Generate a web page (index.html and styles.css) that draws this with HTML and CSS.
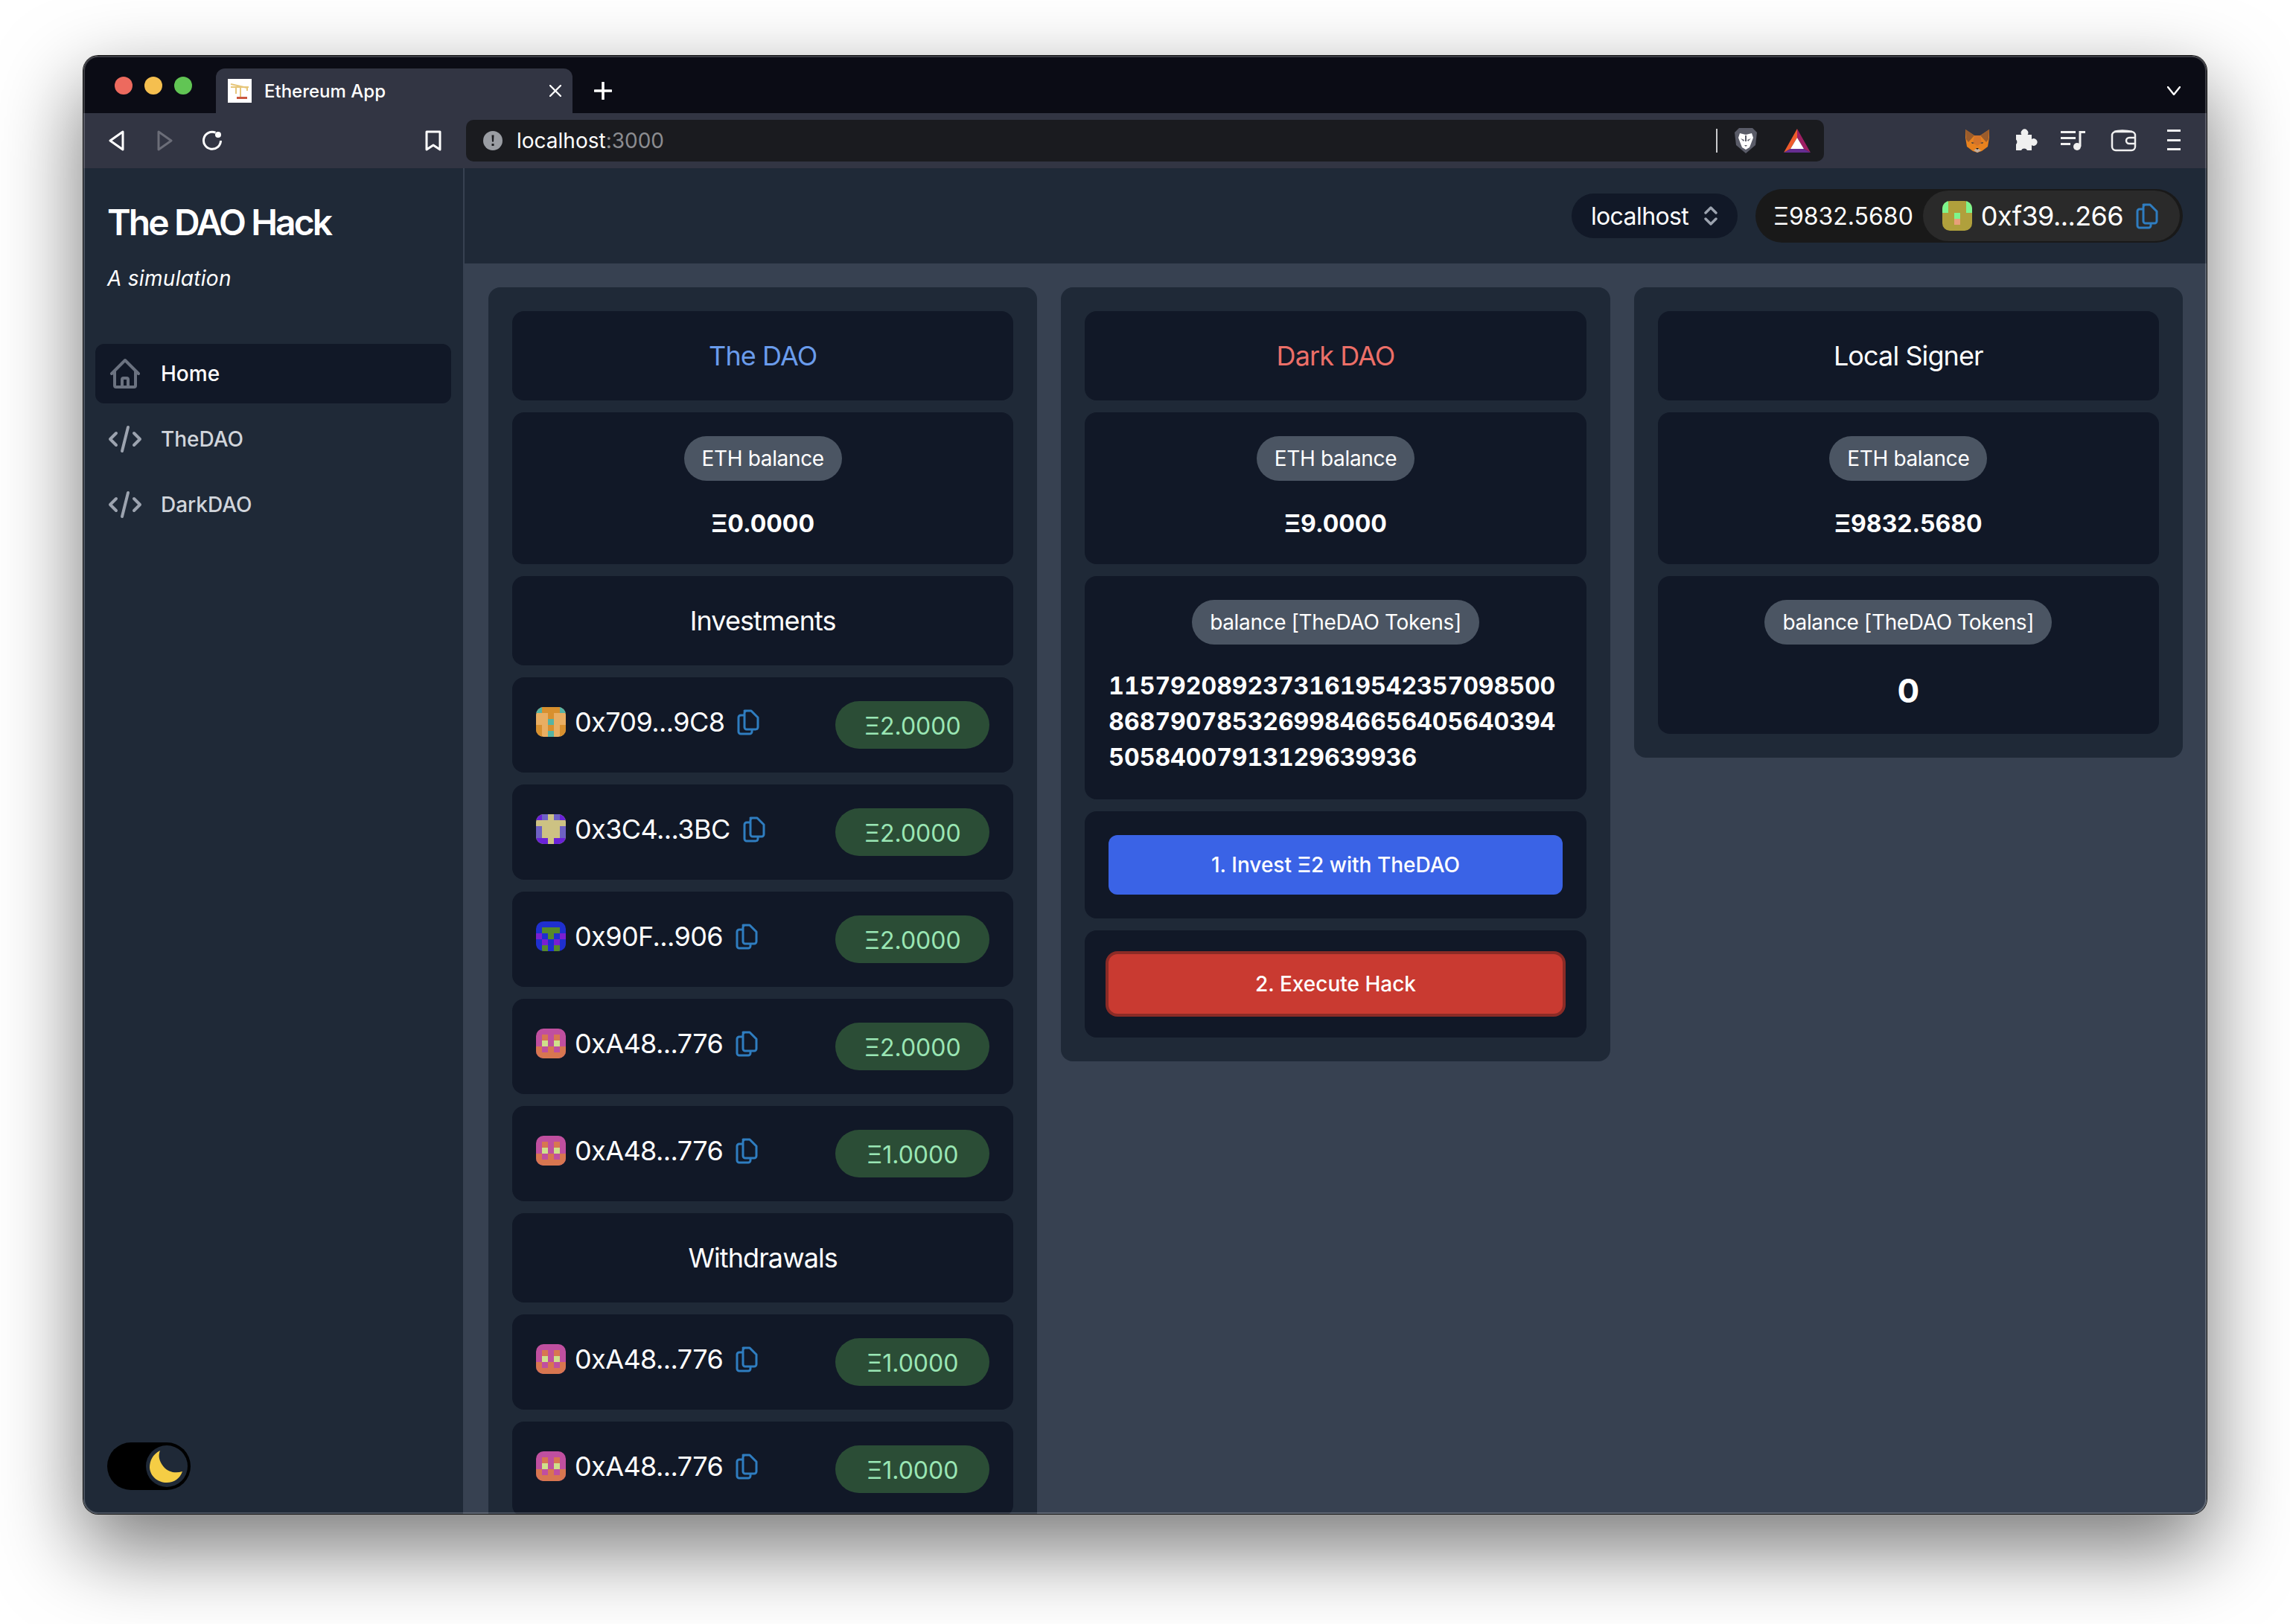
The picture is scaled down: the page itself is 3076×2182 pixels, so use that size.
FILE: index.html
```html
<!DOCTYPE html>
<html lang="en">
<head>
    <meta charset="UTF-8">
    <title>Ethereum App</title>
    <link rel="stylesheet" href="styles.css">
</head>
<body>
    <svg class="sprite">
        <symbol id="copy" viewBox="0 0 32 36">
            <path d="M11 3h9l9 9v13a3 3 0 0 1-3 3H14a3 3 0 0 1-3-3V6a3 3 0 0 1 3-3z" fill="none" stroke="currentColor" stroke-width="3" stroke-linejoin="round"/>
            <path d="M11 9H6a3 3 0 0 0-3 3v19a3 3 0 0 0 3 3h12a3 3 0 0 0 3-3v-3" fill="none" stroke="currentColor" stroke-width="3" stroke-linejoin="round"/>
        </symbol>
        <symbol id="code" viewBox="0 0 24 24">
            <path d="M10 20l4-16m4 4l4 4-4 4M6 16l-4-4 4-4" fill="none" stroke="currentColor" stroke-width="2" stroke-linecap="round" stroke-linejoin="round"/>
        </symbol>
        <symbol id="blockie-a48" viewBox="0 0 5 5">
            <path fill="#c04f9f" d="M0 0h5v5H0z"/>
            <path fill="#d87650" d="M1 1h1v1H1zM3 1h1v1H3zM0 3h1v1H0zM2 3h1v1H2zM4 3h1v1H4zM0 4h5v1H0z"/>
            <path fill="#cfe08a" d="M1 2h1v1H1zM3 2h1v1H3z"/>
        </symbol>
        <symbol id="blockie-709" viewBox="0 0 5 5">
            <path fill="#e9ae62" d="M0 0h5v5H0z"/>
            <path fill="#d8902e" d="M1 0h3v1H1zM2 1h1v1H2zM2 3h1v1H2zM0 3h1v2H0zM4 3h1v2H4z"/>
            <path fill="#56b3a3" d="M0 0h1v1H0zM4 0h1v1H4zM2 2h1v1H2zM2 4h1v1H2z"/>
        </symbol>
        <symbol id="blockie-3c4" viewBox="0 0 5 5">
            <path fill="#cdc283" d="M0 0h5v5H0z"/>
            <path fill="#6a22d8" d="M0 0h1v1H0zM4 0h1v1H4zM0 4h2v1H0zM3 4h2v1H3z"/>
            <path fill="#6e61c4" d="M1 0h1v1H1zM3 0h1v1H3zM0 2h1v2H0zM4 2h1v2H4z"/>
        </symbol>
        <symbol id="blockie-90f" viewBox="0 0 5 5">
            <path fill="#1f2fcf" d="M0 0h5v5H0z"/>
            <path fill="#568a2a" d="M1 1h3v1H1zM2 2h1v1H2zM1 4h1v1H1zM3 4h1v1H3z"/>
            <path fill="#7a1fd0" d="M0 2h1v1H0zM4 2h1v1H4zM1 3h1v1H1zM3 3h1v1H3z"/>
        </symbol>
        <symbol id="blockie-f39" viewBox="0 0 5 5">
            <path fill="#b0a03c" d="M0 0h5v5H0z"/>
            <path fill="#7ef58c" d="M0 0h1v2H0zM4 0h1v2H4zM2 2h1v1H2z"/>
            <path fill="#e8a07a" d="M2 3h1v1H2z"/>
        </symbol>
    </svg>

    <div class="window">
        <div class="tabstrip">
            <div class="dots">
                <span class="dot dot-red"></span>
                <span class="dot dot-yellow"></span>
                <span class="dot dot-green"></span>
            </div>
            <div class="tab">
                <svg class="favicon" viewBox="0 0 32 32">
                    <path fill="#fff" d="M0 0h32v32H0z"/>
                    <path d="M4 7l22 5M4 11h24M17 11v14M11 11v9M26 11v5" fill="none" stroke="#e6c67a" stroke-width="2"/>
                    <path fill="#c9573f" d="M12 24h14v3H12z"/>
                </svg>
                <span class="tab-title">Ethereum App</span>
                <svg class="tab-close" viewBox="0 0 16 16"><path d="M1 1l14 14M15 1L1 15" stroke="#fff" stroke-width="2.4" stroke-linecap="round"/></svg>
            </div>
            <svg class="tab-new" viewBox="0 0 24 24"><path d="M12 1v22M1 12h22" stroke="#fff" stroke-width="3.6" stroke-linecap="round"/></svg>
            <svg class="tab-list" viewBox="0 0 18 12"><path d="M1 1l8 10 8-10" fill="none" stroke="#fff" stroke-width="2.4" stroke-linecap="round" stroke-linejoin="round"/></svg>
        </div>

        <div class="toolbar">
            <div class="nav-btns">
                <svg class="tool" viewBox="0 0 28 28"><path d="M22 2L5 14l17 12z" fill="none" stroke="#fff" stroke-width="3" stroke-linejoin="round"/></svg>
                <svg class="tool" viewBox="0 0 28 28"><path d="M6 2l17 12L6 26z" fill="none" stroke="#6b6d78" stroke-width="3" stroke-linejoin="round"/></svg>
                <svg class="tool" viewBox="0 0 28 28"><path d="M18.500 3.200A11.500 11.500 0 1 0 25.500 14" fill="none" stroke="#fff" stroke-width="3"/><circle cx="22" cy="6" r="4" fill="#fff"/></svg>
            </div>
            <svg class="tool bookmark" viewBox="0 0 28 28"><path d="M5 2h18v24l-9-6-9 6z" fill="none" stroke="#fff" stroke-width="3" stroke-linejoin="round"/></svg>
            <div class="urlbar">
                <svg class="url-info" viewBox="0 0 26 26"><circle cx="13" cy="13" r="13" fill="#9a9da3"/><path fill="#1a1b1f" d="M11.500 5.500h3l-.5 9h-2zM11.500 17h3v3h-3z"/></svg>
                <span class="url-host">localhost<span class="url-port">:3000</span></span>
                <span class="url-sep"></span>
                <svg class="brave" viewBox="0 0 32 36">
                    <path fill="#5a5c68" d="M7 1h18l6 6-2 17-13 11-13-11L1 7z"/>
                    <path fill="#fff" d="M8 8l8 2 8-2 2 6-3 8-2 5-5 3-5-3-2-5-3-8z"/>
                    <path fill="#5a5c68" d="M9 15l5 2-1 2zM23 15l-5 2 1 2zM14 24h4l-2 2zM15 11h2v8h-2z"/>
                </svg>
                <svg class="bat" viewBox="0 0 36 32">
                    <path fill="#ee5b2c" d="M18 0v12L9 27l-9 5z"/>
                    <path fill="#9e1f63" d="M18 0v12l9 15 9 5z"/>
                    <path fill="#662d91" d="M0 32l9-5h18l9 5z"/>
                    <path fill="#fff" d="M18 12l9 15H9z"/>
                </svg>
            </div>
            <div class="extensions">
                <svg class="ext" viewBox="0 0 36 36">
                    <path fill="#e8821e" d="M2 14l2 12 8 6 6 2 6-2 8-6 2-12V3L22 11h-8L2 3z"/>
                    <path fill="#9a5c2c" d="M2 3l12 8-8 9-3-4zM34 3L22 11l8 9 3-4z"/>
                    <path fill="#d4742a" d="M14 11h8l2 10-6 4-6-4z"/>
                    <path fill="#233447" d="M10 20l4 1-3 1zM26 20l-4 1 3 1z"/>
                    <path fill="#c0ad9e" d="M13 31l5 3 5-3-5-3z"/>
                    <path fill="#161616" d="M16 28h4l-2 2z"/>
                </svg>
                <svg class="ext" viewBox="0 0 36 36"><path fill="#f0f0f0" d="M6 10h7.500a4.800 4.800 0 1 1 8 0H27v6a4.800 4.800 0 1 1 0 8v7h-6a4.500 4.500 0 0 0-8 0H6v-8a4.500 4.500 0 0 0 0-6.500z"/></svg>
                <svg class="ext" viewBox="0 0 36 36">
                    <path d="M2 6.500h20M2 14.500h20M2 22.500h13M28 26V6.500h7" fill="none" stroke="#f0f0f0" stroke-width="3"/>
                    <circle cx="24" cy="26" r="5" fill="#f0f0f0"/>
                </svg>
                <svg class="ext ext-wide" viewBox="0 0 36 36">
                    <rect x="3" y="6" width="31" height="25" rx="5" fill="none" stroke="#f0f0f0" stroke-width="2.500"/>
                    <path d="M34 14h-8a4 4 0 0 0 0 8h8M6 6c5-2 16-2 24 0" fill="none" stroke="#f0f0f0" stroke-width="2.500"/>
                </svg>
                <svg class="ext ext-wide" viewBox="0 0 36 36"><path d="M9 4.500h18M9 17.500h18M9 29.500h18" stroke="#f0f0f0" stroke-width="3"/></svg>
            </div>
        </div>

        <div class="app">
            <aside class="sidebar">
                <h1 class="brand">The DAO Hack</h1>
                <p class="tagline">A simulation</p>
                <nav class="nav">
                    <a class="nav-item active">
                        <svg class="nav-icon home-icon" viewBox="0 0 24 24"><path d="M3 12l2-2m0 0l7-7 7 7M5 10v10a1 1 0 001 1h3m10-11l2 2m-2-2v10a1 1 0 01-1 1h-3m-6 0a1 1 0 001-1v-4a1 1 0 011-1h2a1 1 0 011 1v4a1 1 0 001 1m-6 0h6" fill="none" stroke="currentColor" stroke-width="2" stroke-linecap="round" stroke-linejoin="round"/></svg>
                        Home
                    </a>
                    <a class="nav-item">
                        <svg class="nav-icon"><use href="#code"/></svg>
                        TheDAO
                    </a>
                    <a class="nav-item">
                        <svg class="nav-icon"><use href="#code"/></svg>
                        DarkDAO
                    </a>
                </nav>
                <div class="theme-toggle">
                    <span class="toggle-knob">
                        <svg viewBox="0 0 56 56"><path fill="#f5cd45" d="M19 7C9 12 5 21 5 30c1 12 11 20 23 20 10 0 18-6 21-15-9 3-19 1-25-6C18 22 16 14 19 7z"/></svg>
                    </span>
                </div>
            </aside>

            <main class="main">
                <header class="topbar">
                    <div class="network">
                        localhost
                        <svg class="network-arrows" viewBox="0 0 18 26"><path d="M2 9l7-7 7 7M2 17l7 7 7-7" fill="none" stroke="#9ca3af" stroke-width="3.4" stroke-linecap="round" stroke-linejoin="round"/></svg>
                    </div>
                    <div class="wallet">
                        <span class="wallet-balance">Ξ9832.5680</span>
                        <div class="wallet-account">
                            <svg class="blockie"><use href="#blockie-f39"/></svg>
                            <span>0xf39...266</span>
                            <svg class="copy"><use href="#copy"/></svg>
                        </div>
                    </div>
                </header>

                <div class="columns">
                    <section class="column">
                        <div class="card card-title title-blue">The DAO</div>
                        <div class="card stat">
                            <span class="badge">ETH balance</span>
                            <div class="stat-value">Ξ0.0000</div>
                        </div>
                        <div class="card card-title">Investments</div>
                        <div class="card row">
                            <div class="address"><svg class="blockie"><use href="#blockie-709"/></svg><span>0x709...9C8</span><svg class="copy"><use href="#copy"/></svg></div>
                            <span class="amount">Ξ2.0000</span>
                        </div>
                        <div class="card row">
                            <div class="address"><svg class="blockie"><use href="#blockie-3c4"/></svg><span>0x3C4...3BC</span><svg class="copy"><use href="#copy"/></svg></div>
                            <span class="amount">Ξ2.0000</span>
                        </div>
                        <div class="card row">
                            <div class="address"><svg class="blockie"><use href="#blockie-90f"/></svg><span>0x90F...906</span><svg class="copy"><use href="#copy"/></svg></div>
                            <span class="amount">Ξ2.0000</span>
                        </div>
                        <div class="card row">
                            <div class="address"><svg class="blockie"><use href="#blockie-a48"/></svg><span>0xA48...776</span><svg class="copy"><use href="#copy"/></svg></div>
                            <span class="amount">Ξ2.0000</span>
                        </div>
                        <div class="card row">
                            <div class="address"><svg class="blockie"><use href="#blockie-a48"/></svg><span>0xA48...776</span><svg class="copy"><use href="#copy"/></svg></div>
                            <span class="amount">Ξ1.0000</span>
                        </div>
                        <div class="card card-title">Withdrawals</div>
                        <div class="card row">
                            <div class="address"><svg class="blockie"><use href="#blockie-a48"/></svg><span>0xA48...776</span><svg class="copy"><use href="#copy"/></svg></div>
                            <span class="amount">Ξ1.0000</span>
                        </div>
                        <div class="card row">
                            <div class="address"><svg class="blockie"><use href="#blockie-a48"/></svg><span>0xA48...776</span><svg class="copy"><use href="#copy"/></svg></div>
                            <span class="amount">Ξ1.0000</span>
                        </div>
                    </section>

                    <section class="column">
                        <div class="card card-title title-red">Dark DAO</div>
                        <div class="card stat">
                            <span class="badge">ETH balance</span>
                            <div class="stat-value">Ξ9.0000</div>
                        </div>
                        <div class="card stat">
                            <span class="badge">balance [TheDAO Tokens]</span>
                            <div class="stat-value stat-long">115792089237316195423570985008687907853269984665640564039450584007913129639936</div>
                        </div>
                        <div class="card">
                            <button class="btn btn-blue">1. Invest Ξ2 with TheDAO</button>
                        </div>
                        <div class="card">
                            <button class="btn btn-red">2. Execute Hack</button>
                        </div>
                    </section>

                    <section class="column">
                        <div class="card card-title">Local Signer</div>
                        <div class="card stat">
                            <span class="badge">ETH balance</span>
                            <div class="stat-value">Ξ9832.5680</div>
                        </div>
                        <div class="card stat">
                            <span class="badge">balance [TheDAO Tokens]</span>
                            <div class="stat-value stat-big">0</div>
                        </div>
                    </section>
                </div>
            </main>
        </div>
    </div>
</body>
</html>
```

FILE: styles.css
```css
* {
    box-sizing: border-box;
}
html, body {
    margin: 0;
    height: 2182px;
    overflow: hidden;
}
body {
    background: #fff;
    padding: 75px 112px 0 112px;
    font-family: Inter, "Noto Sans", sans-serif;
    color: #fff;
}
.sprite {
    display: none;
}

/* browser window */
.window {
    position: relative;
    height: 1959px;
    display: flex;
    flex-direction: column;
    border-radius: 20px;
    overflow: hidden;
    box-shadow: 0 0 0 1px #111, 0 44px 110px 4px rgba(0, 0, 0, .52);
}
.window::after {
    content: "";
    position: absolute;
    inset: 0;
    border: 2px solid rgba(255, 255, 255, .2);
    border-radius: 20px;
    pointer-events: none;
}
.tabstrip {
    height: 77px;
    flex: none;
    display: flex;
    align-items: flex-end;
    background: #0b0c15;
    padding: 0 35px 0 42px;
}
.dots {
    align-self: flex-start;
    display: flex;
    gap: 16px;
    margin-top: 28px;
}
.dot {
    width: 24px;
    height: 24px;
    border-radius: 50%;
}
.dot-red { background: #ed6a5e; }
.dot-yellow { background: #f5bf4f; }
.dot-green { background: #61c554; }
.tab {
    width: 479px;
    height: 60px;
    margin-left: 32px;
    padding: 0 15px 0 16px;
    display: flex;
    align-items: center;
    background: #323543;
    border-radius: 12px 12px 0 0;
}
.favicon {
    width: 32px;
    height: 32px;
    margin-right: 17px;
}
.tab-title {
    font-size: 24px;
    font-weight: 500;
}
.tab-close {
    width: 16px;
    height: 16px;
    margin-left: auto;
}
.tab-new {
    width: 24px;
    height: 24px;
    margin: 0 0 18px 29px;
}
.tab-list {
    width: 18px;
    height: 12px;
    margin: 0 0 24px auto;
}

.toolbar {
    height: 74px;
    flex: none;
    display: flex;
    align-items: center;
    background: #323543;
    padding: 0 26px 0 31px;
}
.nav-btns {
    display: flex;
    gap: 36px;
}
.tool {
    width: 28px;
    height: 28px;
    display: block;
}
.bookmark {
    margin-left: 269px;
}
.urlbar {
    width: 1824px;
    height: 56px;
    margin-left: 30px;
    padding: 0 18px 0 23px;
    display: flex;
    align-items: center;
    background: #1a1b1f;
    border-radius: 10px;
}
.url-info {
    width: 26px;
    height: 26px;
    margin-right: 19px;
}
.url-host {
    font-size: 28px;
}
.url-port {
    color: #8b8c90;
}
.url-sep {
    width: 2px;
    height: 32px;
    margin-left: auto;
    background: #c9cacc;
}
.brave {
    width: 32px;
    height: 36px;
    margin-left: 22px;
}
.bat {
    width: 36px;
    height: 32px;
    margin-left: 35px;
}
.extensions {
    margin-left: auto;
    display: flex;
    gap: 28px;
}
.ext {
    width: 36px;
    height: 36px;
}
.ext-wide {
    margin-left: 4px;
}

/* app */
.app {
    flex: 1;
    min-height: 0;
    display: flex;
}
.sidebar {
    width: 512px;
    flex: none;
    display: flex;
    flex-direction: column;
    background: #1f2937;
    border-right: 2px solid #374151;
    padding: 41px 16px 32px;
}
.brand {
    margin: 0 0 0 16px;
    font-size: 48px;
    line-height: 64px;
    font-weight: 600;
    letter-spacing: -2.9px;
}
.tagline {
    margin: 23px 0 0 16px;
    font-size: 28px;
    line-height: 40px;
    font-style: italic;
    letter-spacing: .3px;
}
.nav {
    margin-top: 68px;
    display: flex;
    flex-direction: column;
    gap: 8px;
}
.nav-item {
    height: 80px;
    padding: 0 16px;
    display: flex;
    align-items: center;
    gap: 24px;
    border-radius: 12px;
    font-size: 28px;
    font-weight: 500;
    color: #d1d5db;
}
.nav-item.active {
    background: #111827;
    color: #fff;
}
.nav-icon {
    width: 48px;
    height: 48px;
    color: #9ca3af;
}
.home-icon {
    color: #6b7280;
}
.theme-toggle {
    width: 112px;
    height: 64px;
    margin: auto 0 0 16px;
    padding: 4px;
    display: flex;
    justify-content: flex-end;
    background: #000;
    border-radius: 32px;
}
.toggle-knob {
    width: 56px;
    height: 56px;
    border-radius: 50%;
    background: #1f2937;
}
.toggle-knob svg {
    display: block;
}

.main {
    flex: 1;
    min-width: 0;
    display: flex;
    flex-direction: column;
    background: #374151;
}
.topbar {
    height: 128px;
    flex: none;
    display: flex;
    align-items: center;
    justify-content: flex-end;
    gap: 24px;
    background: #1f2937;
    padding: 0 32px;
}
.network {
    width: 223px;
    height: 60px;
    padding: 0 27px 0 26px;
    display: flex;
    align-items: center;
    justify-content: space-between;
    background: #111827;
    border-radius: 30px;
    font-size: 32px;
    letter-spacing: -.6px;
}
.network-arrows {
    width: 18px;
    height: 26px;
}
.wallet {
    height: 72px;
    padding: 2px 4px 2px 24px;
    display: flex;
    align-items: center;
    gap: 13px;
    background: #191919;
    border-radius: 36px;
    font-size: 32px;
}
.wallet-account {
    height: 68px;
    padding: 0 28px 0 26px;
    display: flex;
    align-items: center;
    gap: 12px;
    background: #2a2a2a;
    border-radius: 34px;
    font-size: 36px;
    letter-spacing: -.6px;
}
.blockie {
    width: 40px;
    height: 40px;
    flex: none;
    border-radius: 10px;
}
.copy {
    width: 32px;
    height: 36px;
    flex: none;
    margin-left: 4px;
    color: #2f7dc0;
}

.columns {
    flex: 1;
    min-height: 0;
    overflow: hidden;
    padding: 32px 32px 0;
    display: grid;
    grid-template-columns: repeat(3, 1fr);
    gap: 32px;
    align-items: start;
}
.column {
    display: flex;
    flex-direction: column;
    gap: 16px;
    padding: 32px;
    background: #1f2937;
    border-radius: 16px;
}
.card {
    padding: 32px;
    background: #111827;
    border-radius: 16px;
}
.card-title {
    font-size: 36px;
    line-height: 56px;
    text-align: center;
    letter-spacing: -.9px;
}
.title-blue { color: #6a9cec; }
.title-red { color: #ec6f68; }
.stat {
    text-align: center;
}
.badge {
    display: inline-block;
    height: 60px;
    padding: 0 24px;
    vertical-align: top;
    line-height: 60px;
    font-size: 28px;
    letter-spacing: -.35px;
    background: #4b5563;
    border-radius: 30px;
}
.stat-value {
    margin: 34px 0 -2px;
    font-size: 32px;
    line-height: 48px;
    font-weight: 700;
}
.stat-long {
    margin: 32px 0 0;
    text-align: left;
    word-break: break-all;
    font-variant-numeric: tabular-nums;
}
.stat-big {
    font-size: 44px;
    line-height: 56px;
}
.row {
    display: flex;
    justify-content: space-between;
    align-items: flex-start;
}
.address {
    height: 56px;
    display: flex;
    align-items: center;
    gap: 12px;
    font-size: 36px;
    letter-spacing: -.6px;
}
.amount {
    width: 207px;
    height: 64px;
    line-height: 67px;
    text-align: center;
    font-size: 32px;
    color: #9ae6b4;
    background: #2b4d36;
    border-radius: 32px;
}
.btn {
    display: block;
    width: 100%;
    height: 80px;
    border: 0;
    border-radius: 12px;
    font-family: inherit;
    font-size: 28px;
    font-weight: 500;
    color: #fff;
}
.btn-blue {
    background: #3a63e6;
}
.btn-red {
    background: #c93a31;
    box-shadow: 0 0 0 4px #8b2b26;
}
```
